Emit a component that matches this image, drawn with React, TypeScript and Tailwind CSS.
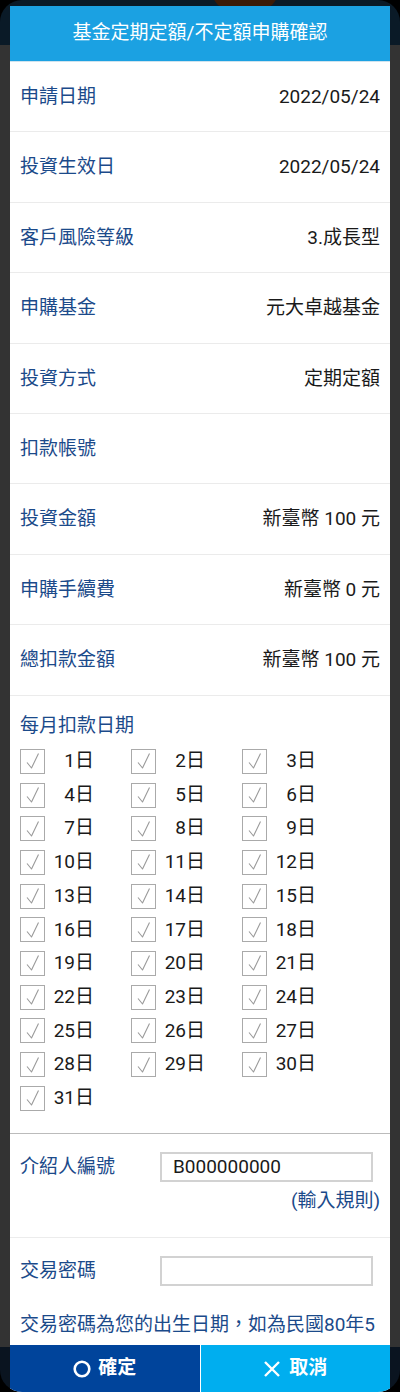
import React from 'react';

const ROWS = [
  { label: '申請日期', value: '2022/05/24' },
  { label: '投資生效日', value: '2022/05/24' },
  { label: '客戶風險等級', value: '3.成長型' },
  { label: '申購基金', value: '元大卓越基金' },
  { label: '投資方式', value: '定期定額' },
  { label: '扣款帳號', value: '' },
  { label: '投資金額', value: '新臺幣 100 元' },
  { label: '申購手續費', value: '新臺幣 0 元' },
  { label: '總扣款金額', value: '新臺幣 100 元' },
];

const DAYS = Array.from({ length: 31 }, (_, i) => i + 1);

function CheckBox() {
  return (
    <div className="w-[25px] h-[25px] border-[1.5px] border-[#aaaaaa] bg-white flex items-center justify-center shrink-0">
      <svg width="22" height="22" viewBox="0 0 22 22" fill="none">
        <path d="M5 12.5 L9.5 18 L16.5 3.5" stroke="#9a9a9a" strokeWidth="1.1" strokeLinejoin="round" />
      </svg>
    </div>
  );
}

export default function App() {
  return (
    <div className="w-[400px] h-[1392px] bg-black font-['Roboto','Noto_Sans_CJK_TC',sans-serif]">
      <div className="relative w-full h-full rounded-[22px] overflow-hidden flex flex-col">
        {/* dimmed page behind */}
        <div className="relative h-[45px] bg-[#0a1a27] overflow-hidden">
          <div className="absolute left-[212px] top-[-28px] w-[66px] h-[38px] rounded-full bg-[#3b1a07]"></div>
        </div>
        <div className="flex-1 bg-[#333333]"></div>
        <div className="h-[45px] bg-[#0a1420]"></div>

        {/* modal */}
        <div className="absolute top-[6px] left-[10px] right-[10px] bottom-0 flex flex-col bg-white">
          <div className="h-[56px] shrink-0 bg-[#1ba1e2] border-b border-[#cfe3ee] flex items-center justify-center text-white text-[19px]">
            基金定期定額/不定額申購確認
          </div>

          <div className="flex-1 overflow-hidden">
            {ROWS.map((row) => (
              <div
                key={row.label}
                className="h-[70.4px] px-[10px] pt-px flex items-center justify-between border-b border-[#ebebeb] text-[19px]"
              >
                <span className="text-[#1b4a8a]">{row.label}</span>
                <span className="text-[#1a1a1a]">{row.value}</span>
              </div>
            ))}

            {/* 每月扣款日期 */}
            <div className="px-[10px] pt-[17px] pb-[18px] border-b border-[#bbbbbb]">
              <div className="text-[19px] text-[#1b4a8a] leading-[26px] mb-[6px]">每月扣款日期</div>
              <div className="grid grid-cols-[111px_111px_111px]">
                {DAYS.map((d) => (
                  <div key={d} className="h-[33.7px] flex items-center">
                    <CheckBox />
                    <span className="w-[49px] text-right text-[19px] text-[#1a1a1a]">{d}日</span>
                  </div>
                ))}
              </div>
            </div>

            {/* 介紹人編號 */}
            <div className="px-[10px] pt-[18px] pb-[23px] border-b border-[#ececec]">
              <div className="flex items-center">
                <span className="w-[140px] text-[19px] text-[#1b4a8a]">介紹人編號</span>
                <div className="w-[213px] h-[30px] border-2 border-[#d2d2d2] flex items-center px-[11px] text-[19px] text-[#1a1a1a]">
                  B000000000
                </div>
              </div>
              <div className="text-right text-[19px] text-[#1b4a8a] mt-[6px] leading-[26px]">(輸入規則)</div>
            </div>

            {/* 交易密碼 */}
            <div className="px-[10px] pt-[18px]">
              <div className="flex items-center">
                <span className="w-[140px] text-[19px] text-[#1b4a8a]">交易密碼</span>
                <div className="w-[213px] h-[30px] border-2 border-[#d2d2d2]"></div>
              </div>
              <p className="mt-[26px] text-[19px] leading-[26px] text-[#1b4a8a] whitespace-nowrap">
                交易密碼為您的出生日期，如為民國80年5
              </p>
            </div>
          </div>

          <div className="h-[47px] shrink-0 flex">
            <button className="flex-1 bg-[#00449b] flex items-center justify-center gap-[7px] text-white text-[19px] font-bold">
              <svg width="18" height="18" viewBox="0 0 18 18" fill="none">
                <circle cx="9" cy="9" r="7.3" stroke="white" strokeWidth="2.6" />
              </svg>
              確定
            </button>
            <div className="w-px bg-white"></div>
            <button className="flex-1 bg-[#00aeef] flex items-center justify-center gap-[8px] text-white text-[19px] font-bold">
              <svg width="18" height="18" viewBox="0 0 18 18" fill="none">
                <path d="M2 2 L16 16 M16 2 L2 16" stroke="white" strokeWidth="2.4" />
              </svg>
              取消
            </button>
          </div>
        </div>
      </div>
    </div>
  );
}
